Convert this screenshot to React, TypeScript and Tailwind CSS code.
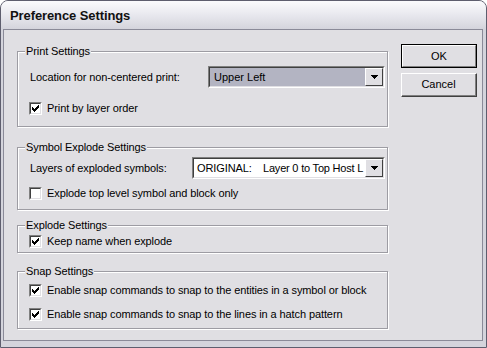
import React from "react";

const FONT = { fontFamily: '"Liberation Sans", Arial, sans-serif' };

function Check({ checked }: { checked: boolean }) {
  return (
    <div className="relative w-[13px] h-[13px] shrink-0 bg-white border-t border-l border-t-[#808080] border-l-[#808080] border-b border-r border-b-white border-r-white">
      <div className="absolute inset-0 border-t border-l border-t-[#404040] border-l-[#404040] border-b border-r border-b-[#e0dfe3] border-r-[#e0dfe3]" />
      {checked && (
        <svg className="absolute left-[2px] top-[2px]" width="7" height="7" viewBox="0 0 7 7" shapeRendering="crispEdges">
          <rect x="6" y="0" width="1" height="1" fill="#000" />
          <rect x="5" y="1" width="2" height="1" fill="#000" />
          <rect x="0" y="2" width="1" height="1" fill="#000" />
          <rect x="4" y="2" width="3" height="1" fill="#000" />
          <rect x="0" y="3" width="2" height="1" fill="#000" />
          <rect x="3" y="3" width="3" height="1" fill="#000" />
          <rect x="0" y="4" width="5" height="1" fill="#000" />
          <rect x="1" y="5" width="3" height="1" fill="#000" />
          <rect x="2" y="6" width="1" height="1" fill="#000" />
        </svg>
      )}
    </div>
  );
}

function CheckRow({ checked, label, className = "" }: { checked: boolean; label: string; className?: string }) {
  return (
    <div className={"flex items-center gap-[5px] pl-[11px] h-[13px] " + className}>
      <Check checked={checked} />
      <span className="text-[11px] leading-[13px] tracking-[-0.1px] text-black whitespace-nowrap">{label}</span>
    </div>
  );
}

function Arrow() {
  return (
    <div className="w-[18px] h-[18px] shrink-0 bg-[#e0dfe3] border border-t-white border-l-white border-b-[#404040] border-r-[#404040] flex items-center justify-center">
      <svg width="7" height="4" viewBox="0 0 7 4" shapeRendering="crispEdges">
        <polygon points="0,0 7,0 3.5,4" fill="#000" />
      </svg>
    </div>
  );
}

function Group({ title, className, children }: { title: string; className: string; children: React.ReactNode }) {
  return (
    <div className={"relative border border-[#9d9ca3] shadow-[inset_1px_1px_0_#ffffff,1px_1px_0_#ffffff] " + className}>
      <span className="absolute -top-[7px] left-[7px] px-[1px] bg-[#e0dfe3] text-[11px] leading-[13px] tracking-[-0.1px] text-black whitespace-nowrap">
        {title}
      </span>
      {children}
    </div>
  );
}

export default function App() {
  return (
    <div style={FONT} className="w-[487px] h-[348px] flex flex-col bg-[#d4d4dc] border border-[#5e5e6e] rounded-t-[8px] overflow-hidden">
      <div className="h-[28px] shrink-0 flex items-center pl-[9px] bg-gradient-to-b from-[#fbfbfd] via-[#e8e8ee] to-[#d4d4dc]">
        <span className="text-[13px] font-bold text-[#111] leading-none tracking-[-0.1px]">Preference Settings</span>
      </div>
      <div className="flex-1 ml-[2px] mr-[3px] mb-[6px] border border-[#8a8a98] bg-[#e0dfe3] flex">
        <div className="w-[371px] ml-[13px] pt-[21px] flex flex-col">
          <Group title="Print Settings" className="h-[76px] pt-[14px]">
            <div className="flex items-center h-[22px]">
              <span className="w-[190px] pl-[12px] text-[11px] tracking-[-0.1px] text-black whitespace-nowrap">
                Location for non-centered print:
              </span>
              <div className="w-[177px] h-[22px] flex items-center bg-[#b3b4c2] border border-t-[#808080] border-l-[#808080] border-b-white border-r-white">
                <div className="flex-1 h-full flex items-center pl-[4px] border-t border-l border-t-[#404040] border-l-[#404040] border-b border-r border-b-[#e0dfe3] border-r-[#e0dfe3]">
                  <span className="flex-1 text-[11px] text-black">Upper Left</span>
                  <Arrow />
                </div>
              </div>
            </div>
            <CheckRow checked label="Print by layer order" className="mt-[14px]" />
          </Group>

          <Group title="Symbol Explode Settings" className="h-[63px] mt-[20px] pt-[9px]">
            <div className="flex items-center h-[22px]">
              <span className="w-[174px] pl-[12px] text-[11px] tracking-[-0.1px] text-black whitespace-nowrap">
                Layers of exploded symbols:
              </span>
              <div className="w-[193px] h-[22px] flex items-center bg-white border border-t-[#808080] border-l-[#808080] border-b-white border-r-white">
                <div className="flex-1 h-full flex items-center pl-[3px] border-t border-l border-t-[#404040] border-l-[#404040] border-b border-r border-b-[#e0dfe3] border-r-[#e0dfe3]">
                  <span className="w-[66px] shrink-0 text-[11px] tracking-[-0.1px] text-black">ORIGINAL:</span>
                  <span className="flex-1 whitespace-nowrap text-[11px] tracking-[-0.2px] text-black">
                    Layer 0 to Top Host L
                  </span>
                  <Arrow />
                </div>
              </div>
            </div>
            <CheckRow checked={false} label="Explode top level symbol and block only" className="mt-[8px]" />
          </Group>

          <Group title="Explode Settings" className="h-[28px] mt-[15px] pt-[9px]">
            <CheckRow checked label="Keep name when explode" />
          </Group>

          <Group title="Snap Settings" className="h-[58px] mt-[18px] pt-[12px]">
            <CheckRow checked label="Enable snap commands to snap to the entities in a symbol or block" />
            <CheckRow checked label="Enable snap commands to snap to the lines in a hatch pattern" className="mt-[11px]" />
          </Group>
        </div>

        <div className="ml-[13px] pt-[14px] flex flex-col gap-[5px]">
          <button className="w-[76px] h-[24px] border border-black bg-[#e0dfe3] p-0">
            <div className="w-full h-full flex items-center justify-center border border-t-white border-l-white border-b-[#808080] border-r-[#808080] text-[11px] text-black">
              OK
            </div>
          </button>
          <button className="w-[76px] h-[24px] bg-[#e0dfe3] border border-t-white border-l-white border-b-[#404040] border-r-[#404040] p-0">
            <div className="w-full h-full flex items-center justify-center border-b border-r border-b-[#808080] border-r-[#808080] text-[11px] text-black">
              Cancel
            </div>
          </button>
        </div>
      </div>
    </div>
  );
}
